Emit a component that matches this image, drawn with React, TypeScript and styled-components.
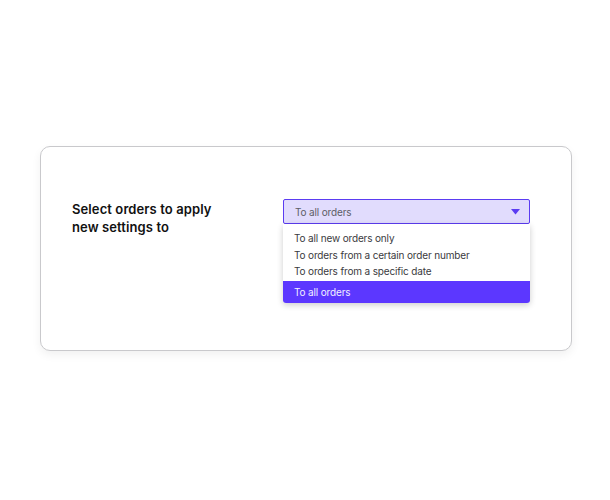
import React from "react";
import styled, { createGlobalStyle } from "styled-components";

const GlobalStyle = createGlobalStyle`
  html, body {
    margin: 0;
    padding: 0;
    background: #ffffff;
    font-family: "Inter", "Noto Sans", sans-serif;
  }
`;

const Page = styled.div`
  width: 610px;
  height: 500px;
  padding: 146px 0 0 40px;
  box-sizing: border-box;
`;

const Card = styled.div`
  width: 532px;
  height: 205px;
  box-sizing: border-box;
  border: 1px solid #c9c9cc;
  border-radius: 10px;
  background: #fff;
  box-shadow: 0 4px 10px rgba(0, 0, 0, 0.06);
  padding: 52px 41px 0 31px;
  display: flex;
  align-items: flex-start;
`;

const Label = styled.div`
  width: 211px;
  margin-top: 1px;
  font-size: 13px;
  font-weight: 600;
  line-height: 18px;
  color: #111;
  letter-spacing: 0.1px;
`;

const SelectWrap = styled.div`
  position: relative;
  width: 247px;
`;

const SelectBox = styled.div`
  height: 25px;
  box-sizing: border-box;
  border: 1px solid #5b3cf2;
  border-radius: 2px;
  background: #e1dcfd;
  display: flex;
  align-items: center;
  justify-content: space-between;
  padding: 1px 9px 0 11px;
  font-size: 10px;
  letter-spacing: -0.15px;
  color: #5d5d66;
`;

const Menu = styled.ul`
  position: absolute;
  top: 25px;
  left: 0;
  right: 0;
  margin: 0;
  padding: 6px 0 0;
  list-style: none;
  background: #fff;
  border-radius: 0 0 3px 3px;
  box-shadow: 0 2px 6px rgba(0, 0, 0, 0.2);
  overflow: hidden;
`;

const Item = styled.li<{ $active?: boolean }>`
  padding: 0 11px;
  height: ${(p) => (p.$active ? "22px" : "16.5px")};
  margin-top: ${(p) => (p.$active ? "1px" : "0")};
  line-height: ${(p) => (p.$active ? "22px" : "16.5px")};
  font-size: 10px;
  letter-spacing: -0.15px;
  color: ${(p) => (p.$active ? "#f3f0ff" : "#3a3a40")};
  background: ${(p) => (p.$active ? "#5c37ff" : "transparent")};
`;

const options = [
  "To all new orders only",
  "To orders from a certain order number",
  "To orders from a specific date",
  "To all orders",
];

export default function App() {
  const selected = "To all orders";
  return (
    <>
      <GlobalStyle />
      <Page>
        <Card>
          <Label>
            Select orders to apply
            <br />
            new settings to
          </Label>
          <SelectWrap>
            <SelectBox>
              <span>{selected}</span>
              <svg width="9" height="6" viewBox="0 0 9 6">
                <path d="M0 0 H9 L4.5 5.5 Z" fill="#5b3cf2" />
              </svg>
            </SelectBox>
            <Menu>
              {options.map((o) => (
                <Item key={o} $active={o === selected}>
                  {o}
                </Item>
              ))}
            </Menu>
          </SelectWrap>
        </Card>
      </Page>
    </>
  );
}
